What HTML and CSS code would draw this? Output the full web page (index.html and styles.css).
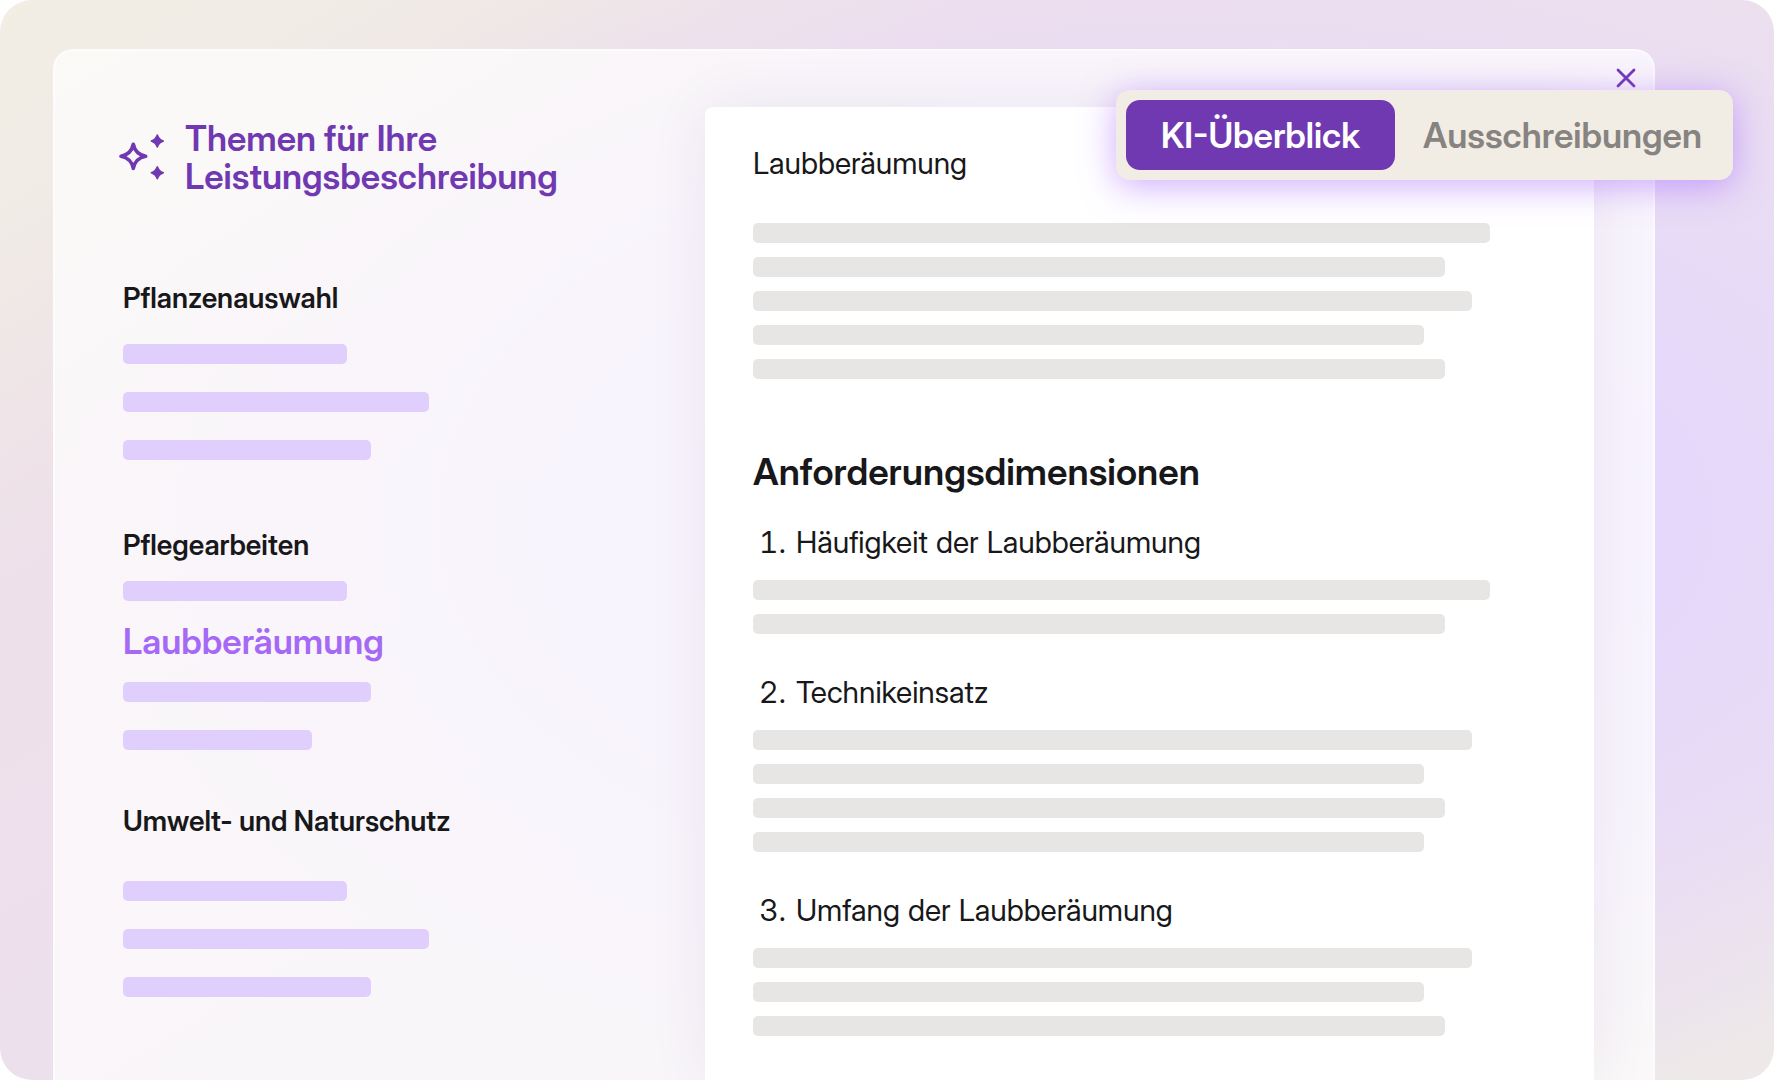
FILE: index.html
```html
<!DOCTYPE html>
<html lang="de">
<head>
    <meta charset="utf-8">
    <title>Leistungsbeschreibung</title>
    <link rel="stylesheet" href="styles.css">
</head>
<body>
<div class="stage">
    <main class="panel">
        <aside class="topics">
            <div class="topics-head">
                <svg class="sparkles" viewBox="0 0 46 48" aria-hidden="true">
                    <path class="star-outline" d="M14.3 11.2C15.6 18 19 21.8 26.6 23.3C19 24.8 15.6 28.6 14.3 35.4C13 28.6 9.6 24.8 2 23.3C9.6 21.8 13 18 14.3 11.2Z"/>
                    <path class="star" d="M38.3 2C39.4 5.2 41.2 6.9 44.3 8C41.2 9.1 39.4 10.8 38.3 14C37.2 10.8 35.4 9.1 32.3 8C35.4 6.9 37.2 5.2 38.3 2Z"/>
                    <path class="star" d="M38.3 33.7C39.4 36.9 41.2 38.6 44.3 39.7C41.2 40.8 39.4 42.5 38.3 45.7C37.2 42.5 35.4 40.8 32.3 39.7C35.4 38.6 37.2 36.9 38.3 33.7Z"/>
                </svg>
                <h1>Themen für Ihre<br>Leistungsbeschreibung</h1>
            </div>

            <section class="topic">
                <h2>Pflanzenauswahl</h2>
                <div class="bars">
                    <div class="bar w-224"></div>
                    <div class="bar w-306"></div>
                    <div class="bar w-248"></div>
                </div>
            </section>

            <section class="topic topic-open">
                <h2>Pflegearbeiten</h2>
                <div class="bar w-224"></div>
                <a class="topic-current" href="#laubberaeumung">Laubberäumung</a>
                <div class="bars">
                    <div class="bar w-248"></div>
                    <div class="bar w-189"></div>
                </div>
            </section>

            <section class="topic topic-last">
                <h2>Umwelt- und Naturschutz</h2>
                <div class="bars">
                    <div class="bar w-224"></div>
                    <div class="bar w-306"></div>
                    <div class="bar w-248"></div>
                </div>
            </section>
        </aside>

        <article class="sheet" id="laubberaeumung">
            <p class="sheet-title">Laubberäumung</p>
            <div class="bars">
                <div class="bar w-737"></div>
                <div class="bar w-692"></div>
                <div class="bar w-719"></div>
                <div class="bar w-671"></div>
                <div class="bar w-692"></div>
            </div>

            <h2>Anforderungsdimensionen</h2>
            <ol>
                <li>
                    <h3><span class="number">1.</span>Häufigkeit der Laubberäumung</h3>
                    <div class="bars">
                        <div class="bar w-737"></div>
                        <div class="bar w-692"></div>
                    </div>
                </li>
                <li>
                    <h3><span class="number">2.</span>Technikeinsatz</h3>
                    <div class="bars">
                        <div class="bar w-719"></div>
                        <div class="bar w-671"></div>
                        <div class="bar w-692"></div>
                        <div class="bar w-671"></div>
                    </div>
                </li>
                <li>
                    <h3><span class="number">3.</span>Umfang der Laubberäumung</h3>
                    <div class="bars">
                        <div class="bar w-719"></div>
                        <div class="bar w-671"></div>
                        <div class="bar w-692"></div>
                    </div>
                </li>
            </ol>
        </article>

        <button class="close" type="button" aria-label="Schließen">
            <svg viewBox="0 0 20 20" aria-hidden="true"><path d="M2 2L18 18M18 2L2 18"/></svg>
        </button>

        <div class="tabs">
            <button class="tab active" type="button">KI-Überblick</button>
            <button class="tab" type="button">Ausschreibungen</button>
        </div>
    </main>
</div>
</body>
</html>
```
FILE: styles.css
```css
* {
    box-sizing: border-box;
}
body {
    margin: 0;
    background-color: #fff;
    color: #18181a;
    font-family: "Inter Display", Inter, "Liberation Sans", sans-serif;
    font-variation-settings: "opsz" 32;
}
h1, h2, h3, p, ol {
    margin: 0;
    padding: 0;
}
button {
    border: none;
    background: none;
    font-family: inherit;
    cursor: pointer;
}

/* background */
.stage {
    display: flex;
    height: 100vh;
    padding: 49px 119px 0 53px;
    overflow: hidden;
    border-radius: 32px;
    background:
        radial-gradient(ellipse 66% 58% at 68% 48%, #e4d6ff 0%, rgba(228, 214, 255, 0.8) 38%, rgba(228, 214, 255, 0) 100%),
        linear-gradient(to bottom right, #f2eee4 0%, #f0ebe5 10%, #eee0ea 27%, #ece0ee 60%, #ede1ec 86%, #eee9e8 97%);
}
.panel {
    position: relative;
    flex: 1;
    display: grid;
    grid-template-columns: 650fr 889fr;
    padding-right: 59px;
    border: 2px solid rgba(255, 255, 255, 0.5);
    border-bottom: none;
    border-radius: 20px 20px 0 0;
    background-color: rgba(255, 255, 255, 0.7);
}

/* left column */
.topics {
    padding: 68px 24px 0 64px;
}
.topics-head {
    display: flex;
    gap: 20px;
    color: #7039b1;
}
.sparkles {
    width: 46px;
    height: 48px;
    margin-top: 14px;
    fill: currentColor;
}
.star-outline {
    fill: none;
    stroke: currentColor;
    stroke-width: 3.6;
    stroke-linejoin: round;
}
.star {
    stroke: currentColor;
    stroke-width: 1.5;
    stroke-linejoin: round;
}
h1 {
    font-size: 35px;
    font-weight: 600;
    line-height: 38px;
}
.topic {
    margin: 86px 0 0 4px;
}
.topic h2 {
    margin-bottom: 29px;
    font-size: 28px;
    font-weight: 600;
    font-variation-settings: "opsz" 28;
    line-height: 34px;
}
.topic-open {
    margin-top: 68px;
}
.topic-open h2 {
    margin-bottom: 19px;
}
.topic-last {
    margin-top: 54px;
}
.topic-last h2 {
    margin-bottom: 43px;
}
.topic-current {
    display: block;
    margin: 21px 0 22px;
    color: #a669f5;
    font-size: 35px;
    font-weight: 600;
    line-height: 38px;
    text-decoration: none;
}

/* placeholder lines */
.bars {
    display: flex;
    flex-direction: column;
    gap: 14px;
}
.topics .bars {
    gap: 28px;
}
.bar {
    max-width: 100%;
    height: 20px;
    border-radius: 5px;
    background-color: #e7e6e4;
}
.topics .bar {
    background-color: #e0cefc;
}
.w-189 { width: 189px; }
.w-224 { width: 224px; }
.w-248 { width: 248px; }
.w-306 { width: 306px; }
.w-671 { width: 671px; }
.w-692 { width: 692px; }
.w-719 { width: 719px; }
.w-737 { width: 737px; }

/* document */
.sheet {
    margin-top: 56px;
    padding: 38px 48px 0;
    border-radius: 8px 8px 0 0;
    background-color: #fff;
    box-shadow: 0 0 60px rgba(60, 40, 90, 0.08);
}
.sheet-title {
    margin-bottom: 42px;
    font-size: 30px;
    line-height: 36px;
}
.sheet h2 {
    margin: 71px 0 30px;
    font-size: 37px;
    font-weight: 600;
    line-height: 44px;
}
.sheet ol {
    display: flex;
    flex-direction: column;
    gap: 40px;
    list-style: none;
}
.sheet h3 {
    display: flex;
    margin-bottom: 20px;
    padding-left: 6px;
    font-size: 30px;
    font-weight: 400;
    font-variation-settings: "opsz" 30;
    line-height: 36px;
    font-variant-numeric: tabular-nums;
}
.number {
    width: 37px;
}

/* controls over the panel */
.close {
    position: absolute;
    top: 17px;
    right: 17px;
    padding: 0;
    color: #7039b1;
}
.close svg {
    display: block;
    width: 20px;
    height: 20px;
    fill: none;
    stroke: currentColor;
    stroke-width: 2.8;
    stroke-linecap: round;
}
.tabs {
    position: absolute;
    top: 39px;
    right: -80px;
    display: flex;
    padding: 10px;
    border-radius: 14px;
    background-color: #f2ede4;
    box-shadow: 0 6px 34px rgba(160, 90, 255, 0.5);
}
.tab {
    padding: 0 21px 0 28px;
    border-radius: 14px;
    color: #868381;
    font-size: 35px;
    font-weight: 600;
    line-height: 70px;
    white-space: nowrap;
}
.tab.active {
    padding: 0 35px;
    background-color: #7039b1;
    color: #fff;
}
```
